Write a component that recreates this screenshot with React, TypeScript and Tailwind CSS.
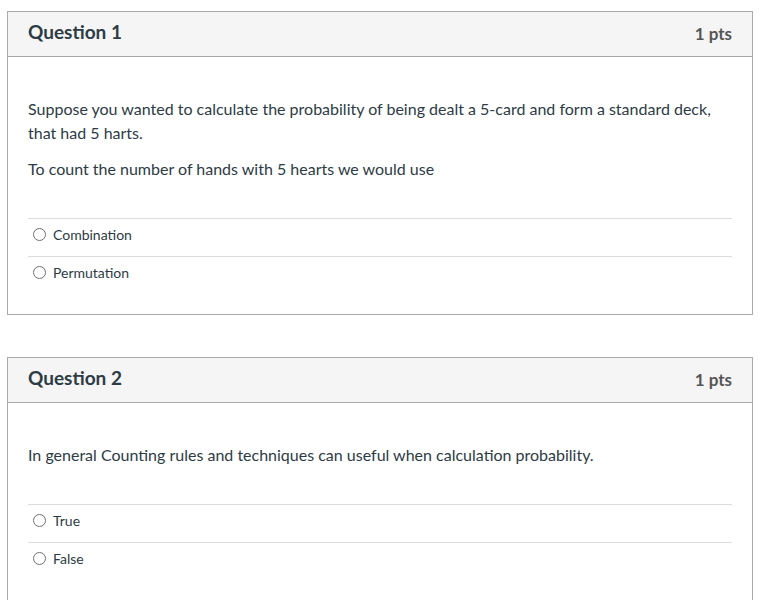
type Question = {
    title: string;
    points: string;
    text: string[];
    answers: string[];
};

const questions: Question[] = [
    {
        title: "Question 1",
        points: "1 pts",
        text: [
            "Suppose you wanted to calculate the probability of being dealt a 5-card and form a standard deck, that had 5 harts.",
            "To count the number of hands with 5 hearts we would use",
        ],
        answers: ["Combination", "Permutation"],
    },
    {
        title: "Question 2",
        points: "1 pts",
        text: ["In general Counting rules and techniques can useful when calculation probability."],
        answers: ["True", "False"],
    },
];

function QuestionCard({ q }: { q: Question }) {
    return (
        <div className="w-[746px] border border-[#a9a9a9] bg-white">
            <div className="h-[45px] bg-[#f5f5f5] border-b border-[#a9a9a9] flex items-center justify-between px-[20px] pb-[3px]">
                <span className="text-[19px] font-bold text-[#2d3b45]">{q.title}</span>
                <span className="text-[17px] font-bold text-[#555555] pt-[2px]">{q.points}</span>
            </div>
            <div className="px-[20px] pt-[40px] pb-[20px]">
                <div className="text-[16px] leading-[24px] text-[#2d3b45] pr-[20px]">
                    {q.text.map((t, i) => (
                        <p key={i} className={i > 0 ? "mt-[12px]" : ""}>
                            {t}
                        </p>
                    ))}
                </div>
                <div className="mt-[37px]">
                    {q.answers.map((a) => (
                        <label
                            key={a}
                            className="h-[38px] border-t border-[#dcdcdc] flex items-center gap-[7px] pl-[5px] pb-[6px] text-[14px] text-[#2d3b45]"
                        >
                            <span className="w-[13px] h-[13px] rounded-full border border-[#6f6f6f] bg-white" />
                            {a}
                        </label>
                    ))}
                </div>
            </div>
        </div>
    );
}

export default function App() {
    return (
        <div className="min-h-[600px] bg-white pt-[11px] pl-[7px] font-['Lato',sans-serif] flex flex-col gap-[42px]">
            {questions.map((q) => (
                <QuestionCard key={q.title} q={q} />
            ))}
        </div>
    );
}
